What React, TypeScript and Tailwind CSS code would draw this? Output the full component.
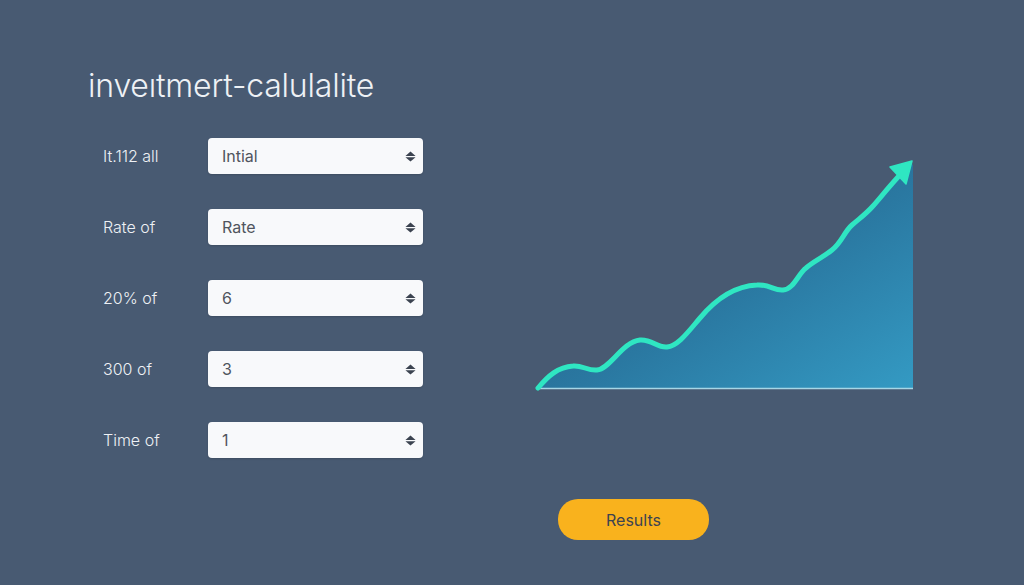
import React from "react";

/* ------------------------------------------------------------------ */
/* Small calculator page: inputs on the left, growth chart on right    */
/* ------------------------------------------------------------------ */

const FIELDS = [
  { label: "It.112 all", value: "Intial" },
  { label: "Rate of", value: "Rate" },
  { label: "20% of", value: "6" },
  { label: "300 of", value: "3" },
  { label: "Time of", value: "1" },
];

function SortIcon() {
  return (
    <svg width="11" height="11" viewBox="0 0 10 10" className="shrink-0">
      <polygon points="5,0.4 9.6,4.5 0.4,4.5" fill="#3b4350" strokeLinejoin="round" />
      <polygon points="0.4,5.6 9.6,5.6 5,9.6" fill="#3b4350" strokeLinejoin="round" />
    </svg>
  );
}

function Field({ label, value }: { label: string; value: string }) {
  return (
    <div className="flex items-center h-[36px]">
      <div className="w-[105px] text-[16px] font-light text-[#eef1f5]">{label}</div>
      <div className="w-[215px] h-[36px] rounded-[4px] bg-[#f8f9fb] flex items-center justify-between pl-[14px] pr-[7px] shadow-[0_1px_2px_rgba(0,0,0,0.15)]">
        <span className="text-[16px] text-[#50555e]">{value}</span>
        <SortIcon />
      </div>
    </div>
  );
}

// growth curve, in a 400x250 box
const CURVE =
  "M8,238 C18,226 28,217 43,216 C52,215 58,221 67,220 C80,219 92,192 110,190 " +
  "C122,189 127,198 137,197 C148,196 158,182 170,168 C185,150 205,136 227,135 " +
  "C240,134 244,141 253,140 C264,139 268,124 276,118 C284,111 292,108 302,100 " +
  "C312,92 314,82 322,75 C330,68 336,64 343,56 C350,48 358,38 368,27";

function GrowthChart() {
  return (
    <svg width="400" height="250" viewBox="0 0 400 250">
      <defs>
        <linearGradient id="area" x1="0" y1="0" x2="1" y2="1">
          <stop offset="0" stopColor="#23567f" />
          <stop offset="0.55" stopColor="#2a78a1" />
          <stop offset="1" stopColor="#349ac3" />
        </linearGradient>
      </defs>
      <path d={`${CURVE} L383,14 L383,238 L8,238 Z`} fill="url(#area)" />
      <line x1="8" y1="238.5" x2="383" y2="238.5" stroke="#a6d6e6" strokeWidth="1.5" />
      <path d={CURVE} fill="none" stroke="#2fe6c2" strokeWidth="5" strokeLinecap="round" />
      <polygon points="382,11 360,17 376,34" fill="#2fe6c2" stroke="#2fe6c2" strokeWidth="1.5" strokeLinejoin="round" />
    </svg>
  );
}

export default function App() {
  return (
    <div
      className="w-[1024px] h-[585px] bg-[#485a72] overflow-hidden pl-[88px] pt-[66px]"
      style={{ fontFamily: "Inter, 'Noto Sans', sans-serif" }}
    >
      <h1 className="h-[40px] leading-[40px] text-[32px] font-light text-[#eef1f5] tracking-[-0.2px]">
        inveıtmert-calulalite
      </h1>

      <div className="flex mt-[32px]">
        <div className="ml-[15px] flex flex-col gap-[35px]">
          {FIELDS.map((f) => (
            <Field key={f.label} label={f.label} value={f.value} />
          ))}
        </div>
        <div className="ml-[107px] mt-[12px]">
          <GrowthChart />
        </div>
      </div>

      <div className="mt-[41px] ml-[470px]">
        <button className="w-[151px] h-[41px] rounded-[20px] bg-[#f9b21d] text-[16px] text-[#3d4350]">
          Results
        </button>
      </div>
    </div>
  );
}
